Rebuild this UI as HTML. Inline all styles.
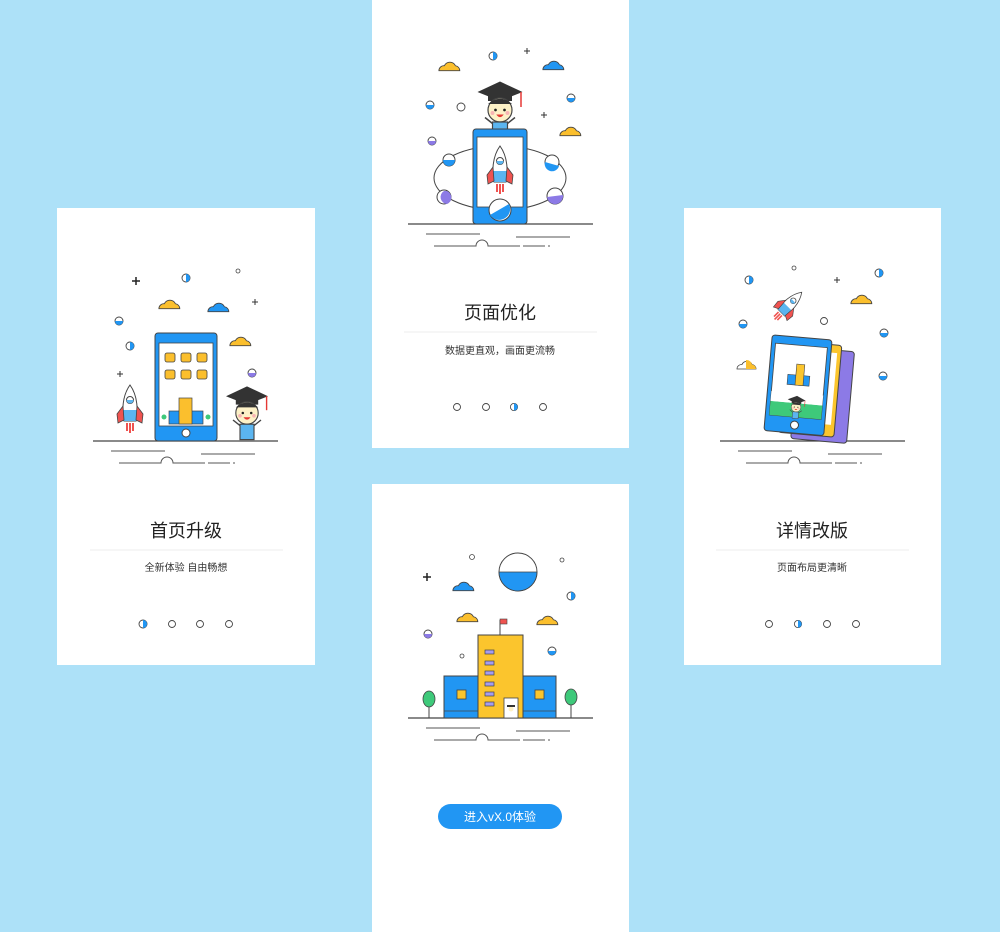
<!DOCTYPE html>
<html><head><meta charset="utf-8">
<style>
html,body{margin:0;padding:0;background:#ade1f8;}
svg{display:block}
text{font-family:"Liberation Sans","Noto Sans CJK SC",sans-serif;}
</style></head>
<body>
<svg width="1000" height="932" viewBox="0 0 1000 932" xmlns="http://www.w3.org/2000/svg">
<defs>
  <g id="ground">
    <line x1="0" y1="0" x2="185" y2="0" stroke="#444" stroke-width="1.2"/>
    <line x1="18" y1="10" x2="72" y2="10" stroke="#555" stroke-width="1"/>
    <line x1="108" y1="13" x2="162" y2="13" stroke="#555" stroke-width="1"/>
    <path d="M26 22 H68 A6 6 0 0 1 80 22 H112 M115 22 H137 M140 22 h2" stroke="#555" stroke-width="1" fill="none"/>
  </g>
  <g id="cloudY"><path d="M-1 7 a4.5 4.5 0 0 1 5-4.5 a5.5 5.5 0 0 1 10 0 a4.5 4.5 0 0 1 4 4.5 z" fill="#fbbf2d" stroke="#444" stroke-width="0.8" transform="scale(1.1)"/></g>
  <g id="cloudB"><path d="M-1 7 a4.5 4.5 0 0 1 5-4.5 a5.5 5.5 0 0 1 10 0 a4.5 4.5 0 0 1 4 4.5 z" fill="#2196f3" stroke="#444" stroke-width="0.8" transform="scale(1.1)"/></g>
  <g id="boy">
    <path d="M-15 -12 L0 -19 L15 -12 L0 -6 z" fill="#333"/>
    <rect x="-8" y="-11" width="16" height="5" fill="#333"/>
    <line x1="14" y1="-12" x2="14" y2="-2" stroke="#e53935" stroke-width="1"/>
    <circle cx="0" cy="0" r="8" fill="#fdf1c7" stroke="#444" stroke-width="0.8"/>
    <path d="M-8 -4 Q0 -11 8 -4" fill="#333"/>
    <circle cx="-3" cy="0" r="0.9" fill="#222"/><circle cx="3" cy="0" r="0.9" fill="#222"/>
    <circle cx="-5" cy="2" r="1.3" fill="#f8b4b4"/><circle cx="5" cy="2" r="1.3" fill="#f8b4b4"/>
    <path d="M-2.5 3 Q0 6.5 2.5 3 z" fill="#e53935"/>
    <path d="M-5 9 L-10 5 M5 9 L10 5" stroke="#444" stroke-width="1"/>
    <rect x="-5" y="8" width="10" height="11" fill="#5bb5f0" stroke="#444" stroke-width="0.8"/>
  </g>
  <g id="rocket">
    <path d="M0 -26 C-8 -15 -8 0 -6 10 H6 C8 0 8 -15 0 -26 z" fill="#fff" stroke="#444" stroke-width="1"/>
    <path d="M-7 -1 H7 C7 5 6 8 6 10 H-6 C-6 8 -7 5 -7 -1 z" fill="#5bb5f0"/>
    <path d="M-7 -5 L-13 3 L-12 12 L-6 9 z M7 -5 L13 3 L12 12 L6 9 z" fill="#ef5350" stroke="#444" stroke-width="0.8"/>
    <circle cx="0" cy="-11" r="3.5" fill="#fff" stroke="#444" stroke-width="1"/>
    <path d="M-3.5 -11 a3.5 3.5 0 0 0 7 0 z" fill="#5bb5f0"/>
    <path d="M-3 12 v8 M0 12 v10 M3 12 v8" stroke="#ef5350" stroke-width="2"/>
  </g>
  <g id="halfB"><circle r="4" fill="#fff" stroke="#444" stroke-width="0.9"/><path d="M-4 0 a4 4 0 0 0 8 0 z" fill="#2196f3"/></g>
  <g id="halfP"><circle r="4" fill="#fff" stroke="#444" stroke-width="0.9"/><path d="M-4 0 a4 4 0 0 0 8 0 z" fill="#8c7ae6"/></g>
  <g id="vB"><circle r="4" fill="#fff" stroke="#444" stroke-width="0.9"/><path d="M0 -4 a4 4 0 0 1 0 8 z" fill="#2196f3"/></g>
  <g id="plus"><path d="M-3 0 h6 M0 -3 v6" stroke="#333" stroke-width="1"/></g>
</defs>

<rect x="57" y="208" width="258" height="457" fill="#fff"/>
<rect x="372" y="0" width="257" height="448" fill="#fff"/>
<rect x="372" y="484" width="257" height="448" fill="#fff"/>
<rect x="684" y="208" width="257" height="457" fill="#fff"/>

<!-- LEFT -->
<use href="#ground" x="93" y="441"/>
<g transform="translate(136,281)"><path d="M-4 0 h8 M0 -4 v8" stroke="#222" stroke-width="1.5"/></g>
<use href="#vB" x="186" y="278"/>
<circle cx="238" cy="271" r="2" fill="#fff" stroke="#444" stroke-width="0.8"/>
<use href="#plus" x="255" y="302"/>
<use href="#cloudY" x="160" y="301"/>
<use href="#cloudB" x="209" y="304"/>
<use href="#halfB" x="119" y="321"/>
<use href="#vB" x="130" y="346"/>
<use href="#cloudY" x="231" y="338"/>
<use href="#halfP" x="252" y="373"/>
<use href="#plus" x="120" y="374"/>
<rect x="155" y="333" width="62" height="108" rx="3" fill="#2196f3" stroke="#444" stroke-width="1"/>
<rect x="159" y="343" width="54" height="83" fill="#fff" stroke="#444" stroke-width="0.8"/>
<circle cx="186" cy="433" r="4" fill="#fff" stroke="#444" stroke-width="1"/>
<g fill="#fbbf2d" stroke="#444" stroke-width="0.8">
<rect x="165" y="353" width="10" height="9" rx="2"/><rect x="181" y="353" width="10" height="9" rx="2"/><rect x="197" y="353" width="10" height="9" rx="2"/>
<rect x="165" y="370" width="10" height="9" rx="2"/><rect x="181" y="370" width="10" height="9" rx="2"/><rect x="197" y="370" width="10" height="9" rx="2"/>
</g>
<rect x="169" y="411" width="34" height="13" fill="#2196f3" stroke="#444" stroke-width="0.7"/>
<rect x="179" y="398" width="13" height="26" fill="#fbbf2d" stroke="#444" stroke-width="0.7"/>
<circle cx="164" cy="417" r="2.5" fill="#3ec97a"/><circle cx="208" cy="417" r="2.5" fill="#3ec97a"/>
<use href="#rocket" x="130" y="411"/>
<g transform="translate(247,413) scale(1.4)"><use href="#boy"/></g>
<text x="186" y="537" font-size="18" text-anchor="middle" fill="#222">首页升级</text>
<line x1="90" y1="550" x2="283" y2="550" stroke="#eee" stroke-width="1"/>
<text x="186" y="571" font-size="10" text-anchor="middle" fill="#333">全新体验  自由畅想</text>
<use href="#vB" x="143" y="624"/>
<circle cx="172" cy="624" r="3.5" fill="#fff" stroke="#444" stroke-width="0.9"/>
<circle cx="200" cy="624" r="3.5" fill="#fff" stroke="#444" stroke-width="0.9"/>
<circle cx="229" cy="624" r="3.5" fill="#fff" stroke="#444" stroke-width="0.9"/>

<!-- TOP MIDDLE -->
<use href="#ground" x="408" y="224"/>
<use href="#cloudY" x="440" y="63"/>
<use href="#cloudB" x="544" y="62"/>
<use href="#vB" x="493" y="56"/>
<use href="#plus" x="527" y="51"/>
<use href="#halfB" x="430" y="105"/>
<circle cx="461" cy="107" r="4" fill="#fff" stroke="#444" stroke-width="0.9"/>
<use href="#halfB" x="571" y="98"/>
<use href="#plus" x="544" y="115"/>
<use href="#cloudY" x="561" y="128"/>
<use href="#halfP" x="432" y="141"/>
<ellipse cx="500" cy="178" rx="66" ry="32" fill="none" stroke="#444" stroke-width="1"/>
<g transform="translate(500,110) scale(1.5)"><use href="#boy"/></g>
<rect x="473" y="129" width="54" height="95" rx="3" fill="#2196f3" stroke="#444" stroke-width="1"/>
<rect x="477" y="137" width="46" height="70" fill="#fff" stroke="#444" stroke-width="0.8"/>
<use href="#rocket" x="500" y="172"/>
<g stroke="#444" stroke-width="1" fill="#fff">
<circle cx="449" cy="160" r="6"/><circle cx="444" cy="197" r="7"/><circle cx="552" cy="162" r="7"/><circle cx="555" cy="196" r="8"/><circle cx="500" cy="210" r="11"/>
</g>
<path d="M443 160 a6 6 0 0 0 12 0 z" fill="#2196f3"/>
<path d="M447 191 a7 7 0 0 1 0 13 a7 7 0 0 1 -3 -13z" fill="#8c7ae6"/>
<path d="M545 162 l14 4 a7 7 0 0 1 -14 -4z" fill="#2196f3"/>
<path d="M547 197 l16 -2 a8 8 0 0 1 -16 2z" fill="#8c7ae6"/>
<path d="M490 215 l19 -11 a11 11 0 0 1 -19 11z" fill="#2196f3"/>
<text x="500" y="319" font-size="18" text-anchor="middle" fill="#222">页面优化</text>
<line x1="404" y1="332" x2="597" y2="332" stroke="#eee" stroke-width="1"/>
<text x="500" y="354" font-size="10" text-anchor="middle" fill="#333">数据更直观，画面更流畅</text>
<circle cx="457" cy="407" r="3.5" fill="#fff" stroke="#444" stroke-width="0.9"/>
<circle cx="486" cy="407" r="3.5" fill="#fff" stroke="#444" stroke-width="0.9"/>
<g transform="translate(514,407) scale(0.9)"><use href="#vB"/></g>
<circle cx="543" cy="407" r="3.5" fill="#fff" stroke="#444" stroke-width="0.9"/>

<!-- BOTTOM MIDDLE -->
<use href="#ground" x="408" y="718"/>
<circle cx="518" cy="572" r="19" fill="#fff" stroke="#444" stroke-width="1"/>
<path d="M499 572 a19 19 0 0 0 38 0 z" fill="#2196f3" stroke="#444" stroke-width="0.8"/>
<circle cx="472" cy="557" r="2.5" fill="#fff" stroke="#444" stroke-width="0.8"/>
<circle cx="562" cy="560" r="2" fill="#fff" stroke="#444" stroke-width="0.8"/>
<g transform="translate(427,577)"><path d="M-4 0 h8 M0 -4 v8" stroke="#222" stroke-width="1.5"/></g>
<use href="#cloudB" x="454" y="583"/>
<use href="#vB" x="571" y="596"/>
<use href="#cloudY" x="458" y="614"/>
<use href="#cloudY" x="538" y="617"/>
<use href="#halfP" x="428" y="634"/>
<circle cx="462" cy="656" r="2" fill="#fff" stroke="#444" stroke-width="0.8"/>
<use href="#halfB" x="552" y="651"/>
<line x1="500" y1="635" x2="500" y2="620" stroke="#444" stroke-width="1"/>
<rect x="500" y="619" width="7" height="5" fill="#ef5350" stroke="#444" stroke-width="0.6"/>
<rect x="444" y="676" width="34" height="42" fill="#2196f3" stroke="#444" stroke-width="1"/>
<rect x="523" y="676" width="33" height="42" fill="#2196f3" stroke="#444" stroke-width="1"/>
<line x1="444" y1="711" x2="478" y2="711" stroke="#444" stroke-width="0.8"/>
<line x1="523" y1="711" x2="556" y2="711" stroke="#444" stroke-width="0.8"/>
<rect x="478" y="635" width="45" height="83" fill="#fbc52d" stroke="#444" stroke-width="1"/>
<g fill="#a59cf0" stroke="#444" stroke-width="0.7">
<rect x="485" y="650" width="9" height="4"/><rect x="485" y="661" width="9" height="4"/><rect x="485" y="671" width="9" height="4"/><rect x="485" y="682" width="9" height="4"/><rect x="485" y="692" width="9" height="4"/><rect x="485" y="702" width="9" height="4"/>
</g>
<rect x="457" y="690" width="9" height="9" fill="#fbc52d" stroke="#444" stroke-width="0.8"/>
<rect x="535" y="690" width="9" height="9" fill="#fbc52d" stroke="#444" stroke-width="0.8"/>
<rect x="504" y="698" width="14" height="20" fill="#fff" stroke="#444" stroke-width="0.8"/>
<circle cx="511" cy="709" r="2.5" fill="#fdf1c7"/><rect x="507" y="705" width="8" height="2" fill="#333"/>
<line x1="429" y1="705" x2="429" y2="718" stroke="#444"/>
<ellipse cx="429" cy="699" rx="6" ry="8" fill="#3ec97a" stroke="#444" stroke-width="0.8"/>
<line x1="571" y1="704" x2="571" y2="718" stroke="#444"/>
<ellipse cx="571" cy="697" rx="6" ry="8" fill="#3ec97a" stroke="#444" stroke-width="0.8"/>
<rect x="438" y="804" width="124" height="25" rx="12.5" fill="#2196f3"/>
<text x="500" y="821" font-size="12" text-anchor="middle" fill="#fff">进入vX.0体验</text>

<!-- RIGHT -->
<use href="#ground" x="720" y="441"/>
<circle cx="794" cy="268" r="2" fill="#fff" stroke="#444" stroke-width="0.8"/>
<use href="#vB" x="749" y="280"/>
<use href="#plus" x="837" y="280"/>
<use href="#vB" x="879" y="273"/>
<use href="#cloudY" x="852" y="296"/>
<g transform="translate(787,307) rotate(45)"><use href="#rocket" transform="scale(0.8)"/></g>
<use href="#halfB" x="743" y="324"/>
<circle cx="824" cy="321" r="3.5" fill="#fff" stroke="#444" stroke-width="0.9"/>
<use href="#halfB" x="884" y="333"/>
<path d="M737 369 a4.5 4.5 0 0 1 5-4.5 a5.5 5.5 0 0 1 10 0 a4.5 4.5 0 0 1 4 4.5 z" fill="#fff" stroke="#444" stroke-width="0.8"/>
<path d="M746 369 V360 a5.5 5.5 0 0 1 6 4.5 a4.5 4.5 0 0 1 4 4.5z" fill="#fbbf2d"/>
<use href="#halfB" x="883" y="376"/>
<g transform="rotate(5 810 390)">
<rect x="795" y="348" width="56" height="92" rx="3" fill="#8c7ae6" stroke="#444" stroke-width="1"/>
</g>
<g transform="rotate(5 800 388)">
<rect x="782" y="342" width="56" height="92" rx="3" fill="#fbc52d" stroke="#444" stroke-width="1"/>
<rect x="786" y="350" width="48" height="72" fill="#fff"/>
</g>
<g transform="rotate(5 795 385)">
<rect x="768" y="337" width="60" height="96" rx="3" fill="#2196f3" stroke="#444" stroke-width="1"/>
<rect x="772" y="345" width="52" height="72" fill="#fff" stroke="#444" stroke-width="0.8"/>
<circle cx="798" cy="425" r="4" fill="#fff" stroke="#444"/>
<rect x="787" y="375" width="22" height="10" fill="#2196f3" stroke="#444" stroke-width="0.6"/>
<rect x="795" y="364" width="8" height="21" fill="#fbc52d" stroke="#444" stroke-width="0.6"/>
<path d="M772 403 h52 v14 h-52z" fill="#3ec97a"/>
<rect x="772" y="393" width="52" height="10" fill="#fff"/>
<g transform="translate(798,407) scale(0.6)"><use href="#boy"/></g>
</g>
<text x="812" y="537" font-size="18" text-anchor="middle" fill="#222">详情改版</text>
<line x1="716" y1="550" x2="909" y2="550" stroke="#eee" stroke-width="1"/>
<text x="812" y="571" font-size="10" text-anchor="middle" fill="#333">页面布局更清晰</text>
<circle cx="769" cy="624" r="3.5" fill="#fff" stroke="#444" stroke-width="0.9"/>
<g transform="translate(798,624) scale(0.9)"><use href="#vB"/></g>
<circle cx="827" cy="624" r="3.5" fill="#fff" stroke="#444" stroke-width="0.9"/>
<circle cx="856" cy="624" r="3.5" fill="#fff" stroke="#444" stroke-width="0.9"/>
</svg>
</body></html>
